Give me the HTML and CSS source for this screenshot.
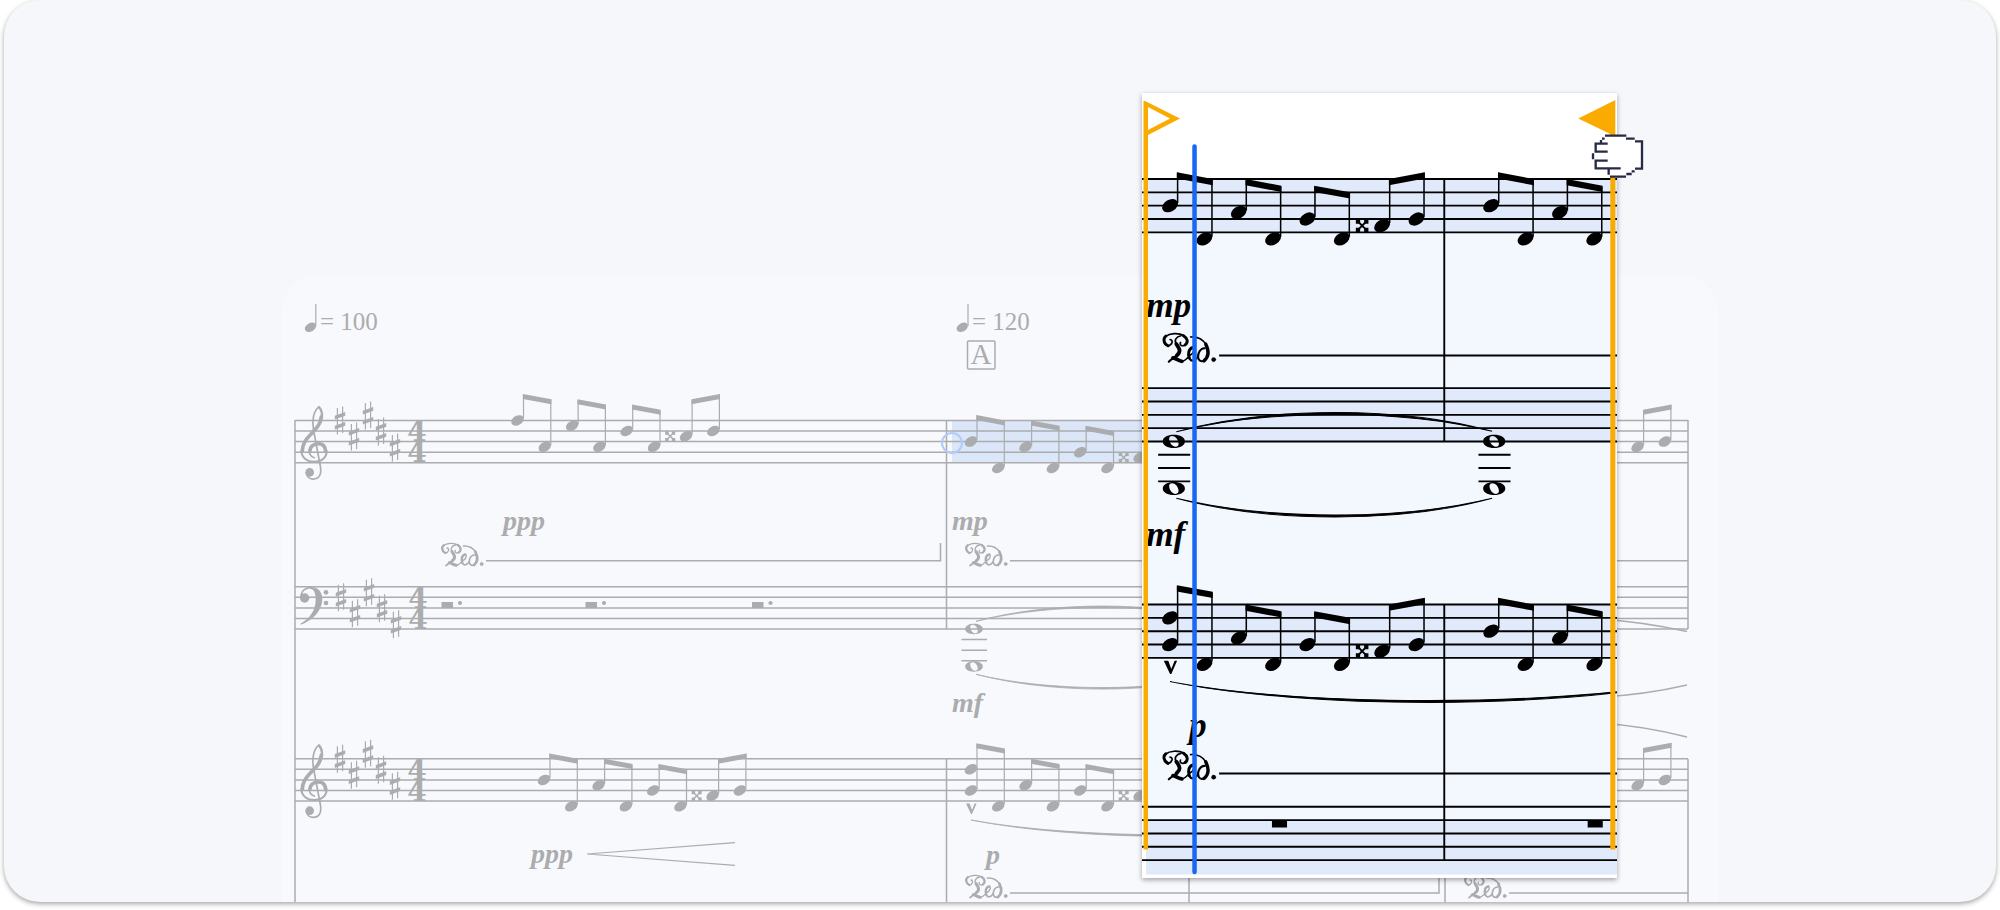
FILE: index.html
```html
<!DOCTYPE html>
<html lang="en">
    <head>
        <meta charset="UTF-8">
        <meta name="viewport" content="width=device-width, initial-scale=1">
        <title>Loop playback</title>
        <link rel="stylesheet" href="styles.css">
    </head>
    <body>
        <main class="card">
            <div class="sheet">
                <svg class="score" viewBox="282 276 1436 626" role="img" aria-label="Score">
                    <defs>
                        <!-- single glyphs, origin at their centre -->
                        <ellipse id="head" rx="6.7" ry="4.7" transform="rotate(-30)" />
                        <g id="sharp">
                            <path class="thin" d="M-2.6 -12.5V14M2.6 -14V12.5" />
                            <path d="M-5.2 -3.6L5.2 -7.4V-3.6L-5.2 .2ZM-5.2 6.4L5.2 2.6V6.4L-5.2 10.2Z" transform="translate(0 -1)" />
                        </g>
                        <g id="double-sharp">
                            <path class="line" d="M-3.5 -3.5L3.5 3.5M3.5 -3.5L-3.5 3.5" />
                            <path d="M-5 -5H-1.6V-2.6L-2.6 -1.6H-5ZM5 -5H1.6V-2.6L2.6 -1.6H5ZM-5 5H-1.6V2.6L-2.6 1.6H-5ZM5 5H1.6V2.6L2.6 1.6H5Z" />
                        </g>
                        <path id="whole" fill-rule="evenodd" d="M-8.8 0C-8.8 -3.2 -5 -5.2 0 -5.2S8.8 -3.2 8.8 0S5 5.2 0 5.2S-8.8 3.2 -8.8 0ZM-3.7 -1.6C-3.5 1.5 -1 4.3 1.3 4.3C3.2 4.3 4 3 3.7 1.2C3.3 -1.9 1 -4.3 -1.3 -4.3C-3.2 -4.3 -3.9 -3.2 -3.7 -1.6Z" />
                        <g id="chord">
                            <use href="#whole" />
                            <use href="#whole" y="37.5" />
                            <path class="line" d="M-12.5 10.6H13M-12.5 21.2H13M-12.5 31.8H13" />
                        </g>

                        <!-- clefs and pedal mark are drawn at three times size -->
                        <g id="treble" transform="scale(.3333) translate(-75 -481)" class="stroke">
                            <path stroke-width="5" d="M146 441C131 452 125 480 131 512L151 618C156 645 146 657 130 657C120 657 110 651 109 638" />
                            <path stroke-width="7" d="M147 441C154 449 157 460 156 472" />
                            <path stroke-width="11" d="M154 470C152 494 138 506 121 524C104 541 97 555 97 572" />
                            <path stroke-width="6" d="M94 572C95 594 112 605 132 605C156 605 170 592 170 573" />
                            <path stroke-width="11" d="M167 574C166 557 157 551 145 551C129 551 120 561 120 571" />
                            <path stroke-width="5" d="M117 570C117 583 123 590 133 593" />
                            <circle cx="119" cy="637" r="11" stroke-width="4" />
                        </g>
                        <g id="bass" transform="scale(.3333) translate(-75 -49)">
                            <path d="M91 86C88 62 103 50 122 50C145 50 158 66 157 88C155 122 128 150 92 163L91 160C118 145 137 122 137 88C137 66 131 55 120 55C108 55 98 62 97 72Z" />
                            <circle cx="104" cy="83" r="14" />
                            <circle cx="168" cy="66" r="7" />
                            <circle cx="168" cy="98" r="7" />
                        </g>
                        <g id="pedal" transform="scale(.3333) translate(-195 -790)" class="stroke">
                            <path stroke-width="7" d="M208 820C197 815 196 802 203 797" />
                            <path stroke-width="4" d="M202 798C212 790 232 788 247 796" />
                            <path stroke-width="7" d="M245 796C255 802 257 812 249 818" />
                            <path stroke-width="4" d="M249 818C242 822 235 819 238 812M208 820C219 818 221 806 213 805" />
                            <path stroke-width="4" d="M239 796C227 798 222 808 228 816" />
                            <path stroke-width="9" d="M228 816C236 827 240 834 229 843" />
                            <path stroke-width="5" d="M230 842C224 847 216 852 210 858" />
                            <path stroke-width="9" d="M220 849C228 850 234 857 241 857" />
                            <path stroke-width="4" d="M241 857C248 857 254 850 260 843C270 838 274 828 268 824" />
                            <path stroke-width="7" d="M268 824C257 826 255 840 259 849" />
                            <path stroke-width="5" d="M259 849C263 860 272 856 280 846" />
                            <path stroke-width="4" d="M262 799C278 798 292 806 299 817" />
                            <path stroke-width="8" d="M298 816C306 832 305 847 294 856" />
                            <path stroke-width="5" d="M294 856C283 860 277 850 281 838C284 830 290 826 296 826" />
                            <circle cx="317" cy="853" r="5" />
                        </g>

                        <!-- five lines, full width -->
                        <path id="staff" class="line" d="M295 0H1688M295 10.6H1688M295 21.2H1688M295 31.8H1688M295 42.4H1688" />
                        <g id="key">
                            <use href="#sharp" x="340" y="0" />
                            <use href="#sharp" x="354" y="16" />
                            <use href="#sharp" x="368" y="-5" />
                            <use href="#sharp" x="381" y="11" />
                            <use href="#sharp" x="395" y="27" />
                        </g>
                        <g id="time" class="time">
                            <text x="417" y="21">4</text>
                            <text x="417" y="42">4</text>
                        </g>

                        <!-- one bar of eighth notes, in pieces so a bar can be partial -->
                        <g id="pair">
                            <use href="#head" y="21.2" />
                            <use href="#head" x="27.3" y="47.6" />
                            <path class="thin" d="M6 19V-5M33.3 46V0" />
                            <path d="M5.4 -5.3L33.9 0V5L5.4 -.3Z" />
                        </g>
                        <g id="last-pair">
                            <use href="#head" x="168.6" y="37.1" />
                            <use href="#head" x="195.9" y="31.8" />
                            <path class="thin" d="M174.6 35V1M201.9 30V-5" />
                            <path d="M174 0L202.5 -5.3V-.3L174 5Z" />
                        </g>
                        <g id="rest-of-bar">
                            <use href="#head" x="54.6" y="26.5" />
                            <use href="#head" x="81.9" y="47.6" />
                            <use href="#head" x="109.2" y="31.8" />
                            <use href="#head" x="136.5" y="47.6" />
                            <use href="#double-sharp" x="152.7" y="37.1" />
                            <path class="thin" d="M60.6 25V1M87.9 46V6M115.2 30V6M142.5 46V11" />
                            <path d="M60 0L88.5 5.3V10.3L60 5ZM114.6 5.3L143.1 10.6V15.6L114.6 10.3Z" />
                            <use href="#last-pair" />
                        </g>
                        <g id="bar">
                            <use href="#pair" />
                            <use href="#rest-of-bar" />
                        </g>

                        <g id="music">
                            <use href="#staff" y="420.4" />
                            <use href="#staff" y="586.7" />
                            <use href="#staff" y="758.7" />
                            <use href="#staff" y="919.5" />
                            <path class="line" d="M295 420V962M946.5 420V629M946.5 759V962M1189 420V629M1189 759V962M1445 420V629M1445 759V962M1688 420V629M1688 759V962" />

                            <!-- bar 1 -->
                            <use href="#treble" transform="translate(295 420.4)" />
                            <use href="#bass" transform="translate(295 586.7)" />
                            <use href="#treble" transform="translate(295 758.7)" />
                            <use href="#key" y="420.4" />
                            <use href="#key" x="1" y="597.3" />
                            <use href="#key" y="758.7" />
                            <use href="#time" y="420.4" />
                            <use href="#time" x="1" y="586.7" />
                            <use href="#time" y="758.7" />
                            <use href="#bar" x="517.5" y="399.2" />
                            <use href="#bar" x="544" y="758.7" />
                            <path d="M441.5 602H453V608H441.5ZM585.5 602H597V608H585.5ZM752 602H763.5V608H752Z" />
                            <circle cx="460" cy="603" r="2.1" />
                            <circle cx="604" cy="603" r="2.1" />
                            <circle cx="770.5" cy="603" r="2.1" />
                            <text class="dynamic" x="503" y="530">ppp</text>
                            <text class="dynamic" x="531" y="863">ppp</text>
                            <path class="thin" d="M735 842.7L587 854L735 865.3" />
                            <use href="#pedal" transform="translate(441 543)" />
                            <path class="line" d="M486 560.7H940.5V543" />

                            <!-- bars 2 and 3 -->
                            <use href="#bar" x="971" y="420.4" />
                            <use href="#bar" x="1226.3" y="420.4" />
                            <use href="#chord" x="974" y="629" />
                            <use href="#chord" x="1228.7" y="629" />
                            <path d="M976 621.3C1050 601 1155 601 1227 621C1155 603 1050 603 976 621.3Z" class="slur" />
                            <path d="M976 674.3C1050 694 1155 694 1227 674.3C1155 692 1050 692 976 674.3Z" class="slur" />
                            <text class="dynamic" x="952" y="530">mp</text>
                            <text class="dynamic" x="952" y="712">mf</text>
                            <use href="#pedal" transform="translate(965 543)" />
                            <path class="line" d="M1010 560.7H1688" />

                            <use href="#head" x="971" y="769.3" />
                            <use href="#head" x="971" y="790.5" />
                            <use href="#head" x="998.3" y="806.3" />
                            <path class="thin" d="M977 789V744M1004.3 804V749" />
                            <path d="M976.4 743.3L1004.9 748.6V753.6L976.4 748.3Z" />
                            <use href="#rest-of-bar" x="971" y="758.7" />
                            <use href="#bar" x="1226.3" y="758.7" />
                            <path d="M966 803.5H969.6L972 810L974.6 803.5H976.6L972 814H971Z" />
                            <path d="M971 820C1080 842 1275 842 1383 820C1275 840 1080 840 971 820Z" class="slur" />
                            <text class="dynamic" x="986" y="864">p</text>
                            <use href="#pedal" transform="translate(965 875)" />
                            <path class="line" d="M1010 893H1439V875" />
                            <path d="M1052 930H1064V936H1052ZM1303 930H1315V936H1303Z" />

                            <!-- bar 4 -->
                            <use href="#last-pair" x="1469" y="409.8" />
                            <use href="#last-pair" x="1469" y="748.1" />
                            <path class="line" d="M1600 619Q1644 622 1687 631.5M1600 697Q1644 695 1687 685M1600 723Q1644 726 1687 737" />
                            <use href="#pedal" transform="translate(1464 875)" />
                            <path class="line" d="M1509 893H1688" />
                        </g>
                    </defs>

                    <rect class="selected" x="952" y="420" width="300" height="43" />
                    <g class="faded">
                        <use href="#head" x="310.5" y="327" transform="translate(31 33) scale(.9)" />
                        <path class="thin" d="M315.8 326V304M968 326V304" />
                        <use href="#head" x="962.5" y="327" transform="translate(96 33) scale(.9)" />
                        <text class="tempo" x="320" y="330">= 100</text>
                        <text class="tempo" x="972" y="330">= 120</text>
                        <rect class="line" x="967.5" y="341" width="27.5" height="28" rx="1" />
                        <text class="mark" x="981" y="364">A</text>
                        <use href="#music" />
                    </g>
                    <circle class="anchor" cx="952" cy="443" r="10" />
                </svg>

                <div class="loop">
                    <svg class="score" viewBox="1142 93 475 784" role="img" aria-label="Loop region">
                        <rect class="region" x="1146" y="179" width="471" height="695" />
                        <path class="band" d="M1146 179H1617V232H1146ZM1146 388H1617V441H1146ZM1146 604H1617V657H1146ZM1146 819H1617V874H1146Z" />
                        <use href="#music" transform="translate(-50.5 -349.5) scale(1.257)" />
                        <path class="marker" d="M1143.5 101H1145L1180 118.5L1148 135V849H1143.5ZM1148 107V130L1170 118.5Z" />
                        <path class="marker" d="M1615 100V849H1610V134L1578 118.5Z" />
                        <path class="playhead" d="M1194.5 146.5V871.5" />
                    </svg>
                </div>

                <!-- grabbing hand over the loop end marker -->
                <svg class="hand" viewBox="660 160 165 141" aria-hidden="true">
                    <path class="hand-fill" d="M705 168H768V177H793V185H816V268H795V275H785V283H770V290H720V266H677V243L669 240V220L677 216V192H693V181H701Z" />
                    <path class="hand-line" d="M705 168H769M768 177H794M795 185H816V267H795M794 275H785M785 283H769M768 291H720M716 285V266M675 266H752M677 269V243H713M669 239V221M677 216H713M677 219V192H713M693 190V181M696 177H704" />
                </svg>
            </div>
        </main>
    </body>
</html>
```
FILE: styles.css
```css
body {
    margin: 0;
    background-color: white;

    font-family: "Liberation Serif", serif;
}

.card {
    margin: 0 4px 8px;
    padding-top: 276px;
    overflow: hidden;

    background-color: #f5f7fb;
    border-radius: 36px;
    box-shadow: 0 2px 5px rgba(0, 0, 0, 0.35);
}

.sheet {
    position: relative;
    width: 90%;
    max-width: 1436px;
    margin: 0 auto;

    background-color: #f8f9fd;
    border-radius: 36px 36px 0 0;
}

.score {
    display: block;
    width: 100%;
}

/* score drawing */

.faded {
    color: #abacae;
    fill: #abacae;
}

.line, .thin {
    fill: none;
    stroke: currentColor;
    stroke-width: 1.5;
}

.thin {
    stroke-width: 1.2;
}

.stroke {
    fill: none;
    stroke: currentColor;
    stroke-linecap: round;
}

.stroke circle {
    fill: currentColor;
}

.slur {
    stroke: currentColor;
    stroke-width: 0.8;
}

.time {
    font-family: "DejaVu Serif", serif;
    font-size: 28px;
    font-weight: bold;
    text-anchor: middle;
}

.dynamic {
    font-size: 28px;
    font-weight: bold;
    font-style: italic;
}

.tempo {
    font-size: 25px;
}

.mark {
    font-size: 29px;
    text-anchor: middle;
}

.selected {
    fill: #dbe6f8;
}

.anchor {
    fill: none;
    stroke: #b1cbf9;
    stroke-width: 2;
}

/* enlarged loop region */

.loop {
    position: absolute;
    top: -183px;
    left: 59.9%;
    width: 33.1%;

    color: black;
    background-color: white;
    box-shadow: 0 2px 5px rgba(0, 0, 0, 0.35);
}

.region {
    fill: #f3f7fe;
}

.band {
    fill: #e1eafa;
}

.marker {
    fill: #f9ab00;
    fill-rule: evenodd;
}

.playhead {
    stroke: #1967f2;
    stroke-width: 4.5;
    stroke-linecap: round;
}

.hand {
    position: absolute;
    top: -143px;
    left: 91.1%;
    width: 55px;
}

.hand-fill {
    fill: white;
}

.hand-line {
    fill: none;
    stroke: #272a45;
    stroke-width: 7;
}
```
